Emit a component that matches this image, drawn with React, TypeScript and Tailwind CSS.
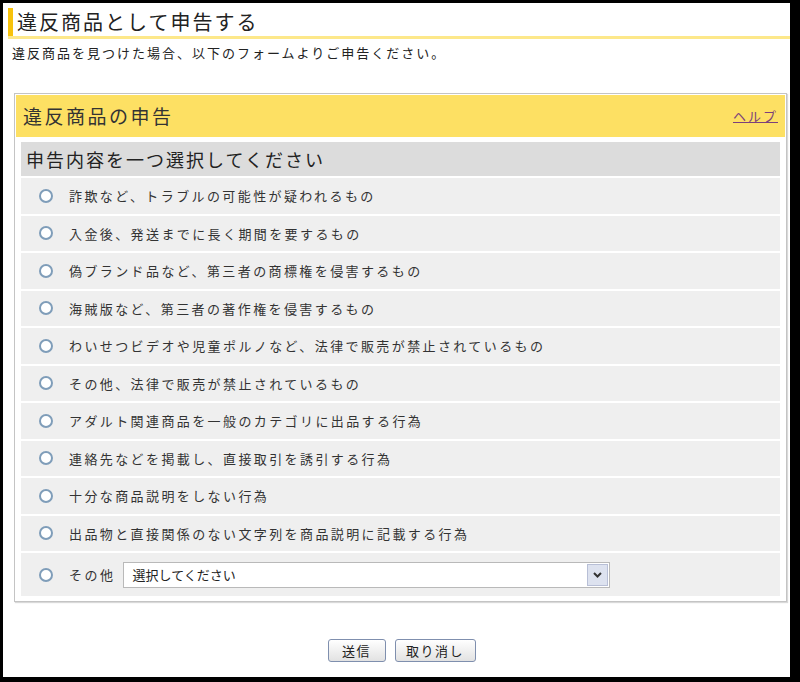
import React from 'react';

const font = { fontFamily: '"Noto Sans CJK JP", "Noto Sans", sans-serif' };

const options = [
  '詐欺など、トラブルの可能性が疑われるもの',
  '入金後、発送までに長く期間を要するもの',
  '偽ブランド品など、第三者の商標権を侵害するもの',
  '海賊版など、第三者の著作権を侵害するもの',
  'わいせつビデオや児童ポルノなど、法律で販売が禁止されているもの',
  'その他、法律で販売が禁止されているもの',
  'アダルト関連商品を一般のカテゴリに出品する行為',
  '連絡先などを掲載し、直接取引を誘引する行為',
  '十分な商品説明をしない行為',
  '出品物と直接関係のない文字列を商品説明に記載する行為',
];

const Radio = () => (
  <span className="w-[14px] h-[14px] rounded-full border-2 border-[#7f9db9] bg-white shrink-0" />
);

export default function App() {
  return (
    <div className="w-[800px] h-[682px] bg-black pt-[3px] pl-[3px]" style={font}>
      <div className="w-[787px] h-[674px] bg-white flex flex-col text-[#333]">
        <div className="mt-[5px] ml-[5px] flex items-stretch border-b-[3px] border-[#fde88a]">
          <div className="w-[5px] bg-[#f7c20c]" />
          <h1 className="pl-[4px] h-[28px] text-[20px] leading-[28px] tracking-[2px] text-[#222]">違反商品として申告する</h1>
        </div>
        <p className="mt-[5px] ml-[9px] text-[13px] leading-[18px] tracking-[2px] text-[#222]">違反商品を見つけた場合、以下のフォームよりご申告ください。</p>

        <div className="mt-[31px] ml-[11px] w-[773px] border border-[#c4c4c4] shadow-[1px_1px_1px_rgba(0,0,0,0.15)] p-[1px] pb-[5px]">
          <div className="h-[42px] bg-[#fde063] flex items-center justify-between pl-[7px] pr-[7px]">
            <span className="text-[19px] tracking-[2.5px] text-[#333]">違反商品の申告</span>
            <span className="text-[13px] tracking-[2px] text-[#7b3f7b] underline">ヘルプ</span>
          </div>
          <div className="mx-[5px] mt-[5px] flex flex-col gap-[2px]">
            <div className="h-[34px] bg-[#dcdcdc] flex items-center pl-[5px] text-[18px] tracking-[2px] text-[#222]">
              申告内容を一つ選択してください
            </div>
            {options.map(o => (
              <div key={o} className="h-[35.5px] bg-[#efefef] flex items-center pl-[18px] gap-[16px] text-[13px] tracking-[2.4px] text-[#333]">
                <Radio />
                <span>{o}</span>
              </div>
            ))}
            <div className="h-[43px] bg-[#efefef] flex items-center pl-[18px] text-[13px] text-[#333]">
              <Radio />
              <span className="ml-[16px] tracking-[2.5px]">その他</span>
              <div className="ml-[7px] w-[487px] h-[26px] border border-[#b9b9b9] bg-white flex items-center">
                <span className="flex-1 pl-[9px] text-[13px] text-[#222]">選択してください</span>
                <span className="w-[21px] h-[22px] mr-[1px] bg-[#dde2ef] border border-[#b8bfd6] flex items-center justify-center">
                  <svg width="9" height="6" viewBox="0 0 9 6"><path d="M1 1l3.5 3.5L8 1" stroke="#333" strokeWidth="2" fill="none" /></svg>
                </span>
              </div>
            </div>
          </div>
        </div>

        <div className="mt-[37px] flex justify-center gap-[9px] pl-[10px]">
          <button className="w-[58px] h-[23px] rounded-[3px] border border-[#7f8fae] bg-gradient-to-b from-white to-[#e2e2e2] text-[13px] tracking-[1.5px] text-[#222]">送信</button>
          <button className="w-[81px] h-[23px] rounded-[3px] border border-[#7f8fae] bg-gradient-to-b from-white to-[#e2e2e2] text-[13px] tracking-[1.5px] text-[#222]">取り消し</button>
        </div>
      </div>
    </div>
  );
}
